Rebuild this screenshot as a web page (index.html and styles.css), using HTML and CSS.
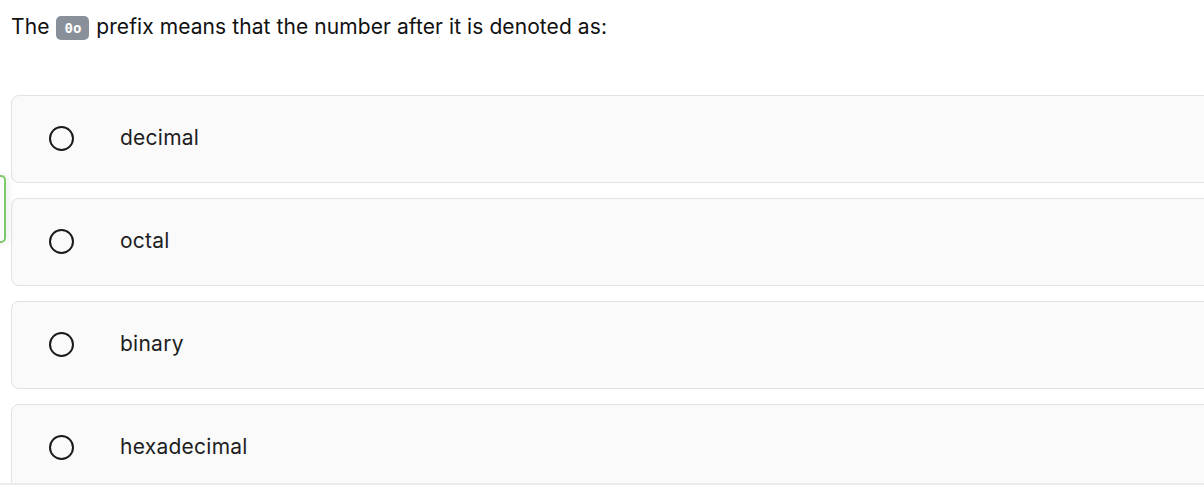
FILE: index.html
```html
<!DOCTYPE html>
<html>
<head>
<meta charset="utf-8">
<link rel="stylesheet" href="styles.css">
</head>
<body>
<div class="page">
  <p class="question">The <code class="chip">0o</code> prefix means that the number after it is denoted as:</p>
  <div class="options">
    <div class="option"><span class="radio"></span><span class="label">decimal</span></div>
    <div class="option"><span class="radio"></span><span class="label">octal</span></div>
    <div class="option"><span class="radio"></span><span class="label">binary</span></div>
    <div class="option"><span class="radio"></span><span class="label">hexadecimal</span></div>
  </div>
</div>
<div class="side-tab"></div>
<div class="bottom-bar"></div>
</body>
</html>
```
FILE: styles.css
```css
html, body {
  margin: 0;
  padding: 0;
  background: #ffffff;
  overflow: hidden;
  height: 493px;
}
body {
  font-family: Inter, "Noto Sans", sans-serif;
  color: #1a1a1a;
}
.page {
  padding: 0 0 0 11px;
  width: 1260px;
}
.question {
  margin: 0;
  padding-top: 13px;
  font-size: 21px;
  line-height: 28px;
  letter-spacing: 0.08px;
  color: #111;
}
.chip {
  display: inline-block;
  font-family: "DejaVu Sans Mono", monospace;
  font-weight: bold;
  font-size: 14px;
  line-height: 24px;
  height: 24px;
  padding: 0 8px;
  background: #8a9099;
  color: #fff;
  border-radius: 5px;
  vertical-align: 1px;
  margin: 0 1px;
  letter-spacing: 0;
}
.options {
  margin-top: 54px;
  display: flex;
  flex-direction: column;
  gap: 15px;
}
.option {
  height: 86px;
  border: 1px solid #e2e2e7;
  border-radius: 8px;
  background: #fafafa;
  display: flex;
  align-items: center;
  padding-left: 37px;
  box-sizing: content-box;
}
.radio {
  width: 21px;
  height: 21px;
  border: 2.5px solid #1a1a1a;
  border-radius: 50%;
  flex: none;
  margin-bottom: 2px;
}
.label {
  margin-left: 46px;
  font-size: 21px;
  letter-spacing: 0.25px;
  color: #1e1e1e;
  padding-bottom: 4px;
}
.side-tab {
  position: absolute;
  left: -20px;
  top: 175px;
  width: 22px;
  height: 64px;
  border: 2px solid #7cc96a;
  border-radius: 5px;
  background: #fff;
  box-shadow: 2px 0 8px rgba(0,0,0,0.08);
}
.bottom-bar {
  position: absolute;
  left: 0;
  right: 0;
  top: 483px;
  height: 10px;
  border-top: 2px solid #ececec;
  background: #fff;
}
```
